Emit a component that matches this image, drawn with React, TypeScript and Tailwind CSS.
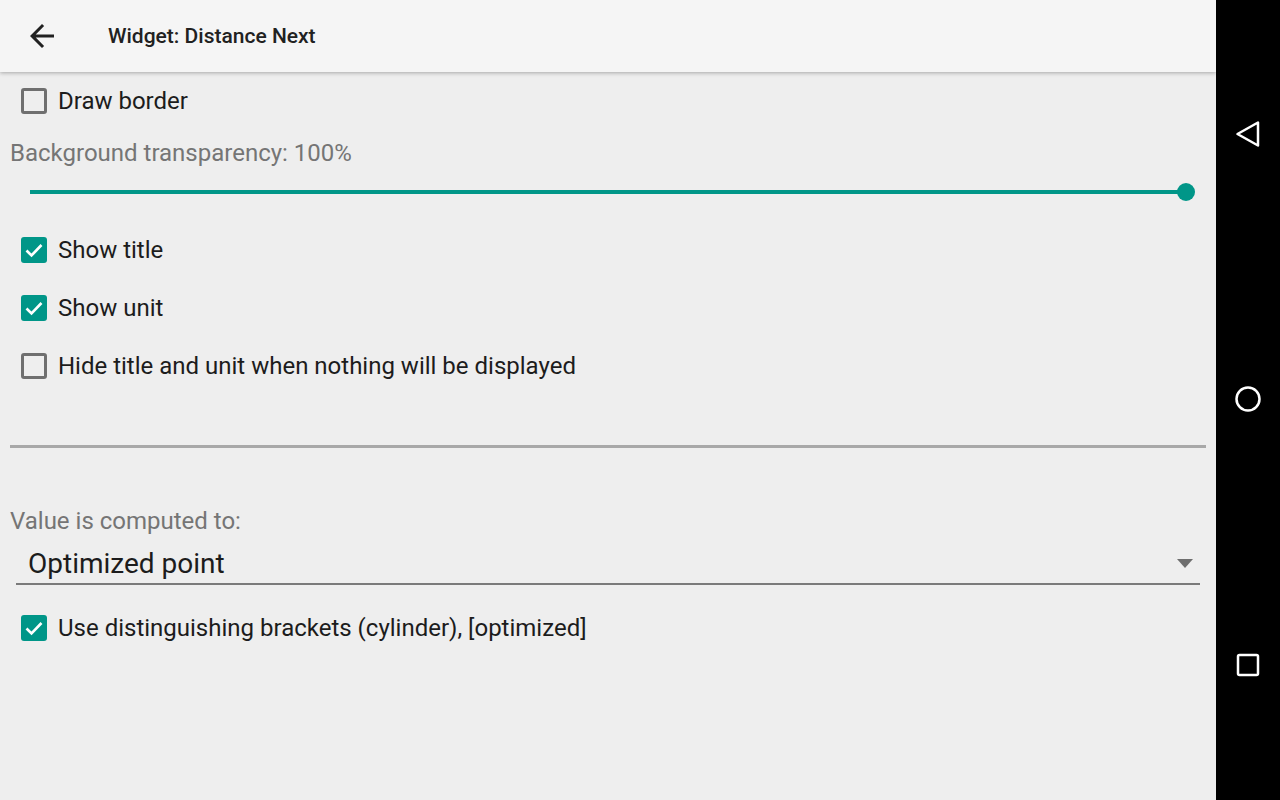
import React from "react";

const font = { fontFamily: "Roboto, 'Noto Sans', sans-serif" };

function Box({ checked }: { checked: boolean }) {
  if (checked) {
    return (
      <div className="w-[26px] h-[26px] rounded-[3px] bg-[#009688] flex items-center justify-center shrink-0">
        <svg width="24" height="24" viewBox="0 0 24 24">
          <path d="M4.5 12.5l5 5L19.5 7" fill="none" stroke="#ffffff" strokeWidth="2.6" />
        </svg>
      </div>
    );
  }
  return <div className="w-[26px] h-[26px] rounded-[3px] border-[3px] border-[#6f6f6f] shrink-0" />;
}

function CheckRow({ checked, label }: { checked: boolean; label: string }) {
  return (
    <div className="h-[58px] flex items-center pl-[21px] gap-[11px]">
      <Box checked={checked} />
      <span className="text-[24px] text-[#1c1c1c] leading-none">{label}</span>
    </div>
  );
}

export default function App() {
  return (
    <div className="w-[1280px] h-[800px] flex overflow-hidden" style={font}>
      <div className="w-[1216px] h-full bg-[#eeeeee] flex flex-col">
        <div className="h-[72px] bg-[#f5f5f5] flex items-center shadow-[0_1px_4px_rgba(0,0,0,0.3)] relative z-10 shrink-0">
          <div className="w-[84px] flex items-center justify-center">
            <svg width="36" height="36" viewBox="0 0 24 24">
              <path d="M20 11H7.83l5.59-5.59L12 4l-8 8 8 8 1.41-1.41L7.83 13H20v-2z" fill="#212121" />
            </svg>
          </div>
          <span className="ml-[24px] text-[21px] font-medium text-[#212121] leading-none">Widget: Distance Next</span>
        </div>
        <CheckRow checked={false} label="Draw border" />
        <div className="h-[46px] flex items-center pl-[10px]">
          <span className="text-[24px] text-[#757575] leading-none">Background transparency: 100%</span>
        </div>
        <div className="h-[30px] flex items-center pl-[30px] pr-[21px] pt-[2px]">
          <div className="flex-1 h-[4px] bg-[#009688]" />
          <div className="w-[18px] h-[18px] rounded-full bg-[#009688] -ml-[9px]" />
        </div>
        <div className="h-[15px]" />
        <CheckRow checked={true} label="Show title" />
        <CheckRow checked={true} label="Show unit" />
        <CheckRow checked={false} label="Hide title and unit when nothing will be displayed" />
        <div className="h-[50px]" />
        <div className="ml-[10px] mr-[10px] h-[3px] bg-[#a8a8a8]" />
        <div className="h-[59px]" />
        <div className="pl-[10px] h-[28px] flex items-center">
          <span className="text-[24px] text-[#757575] leading-none">Value is computed to:</span>
        </div>
        <div className="mx-[16px] h-[50px] border-b-[2px] border-[#7a7a7a] flex items-center pl-[12px] pr-[7px]">
          <span className="flex-1 text-[28px] text-[#1c1c1c] leading-none pt-[10px]">Optimized point</span>
          <svg width="16" height="9" viewBox="0 0 16 9" className="mt-[8px]">
            <path d="M0 0h16L8 9z" fill="#6e6e6e" />
          </svg>
        </div>
        <div className="h-[14px]" />
        <CheckRow checked={true} label="Use distinguishing brackets (cylinder), [optimized]" />
      </div>
      <div className="w-[64px] h-full bg-black flex flex-col items-center">
        <div className="h-[268px] flex items-center">
          <svg width="26" height="28" viewBox="0 0 26 28">
            <path d="M2.5 14L23 2.5V25.5Z" fill="none" stroke="#ffffff" strokeWidth="2.5" strokeLinejoin="round" />
          </svg>
        </div>
        <div className="h-[262px] flex items-center">
          <svg width="28" height="28" viewBox="0 0 28 28">
            <circle cx="14" cy="14" r="11.5" fill="none" stroke="#ffffff" strokeWidth="2.5" />
          </svg>
        </div>
        <div className="h-[270px] flex items-center">
          <svg width="24" height="24" viewBox="0 0 24 24">
            <rect x="2" y="2" width="20" height="20" rx="1.5" fill="none" stroke="#ffffff" strokeWidth="2.5" />
          </svg>
        </div>
      </div>
    </div>
  );
}
